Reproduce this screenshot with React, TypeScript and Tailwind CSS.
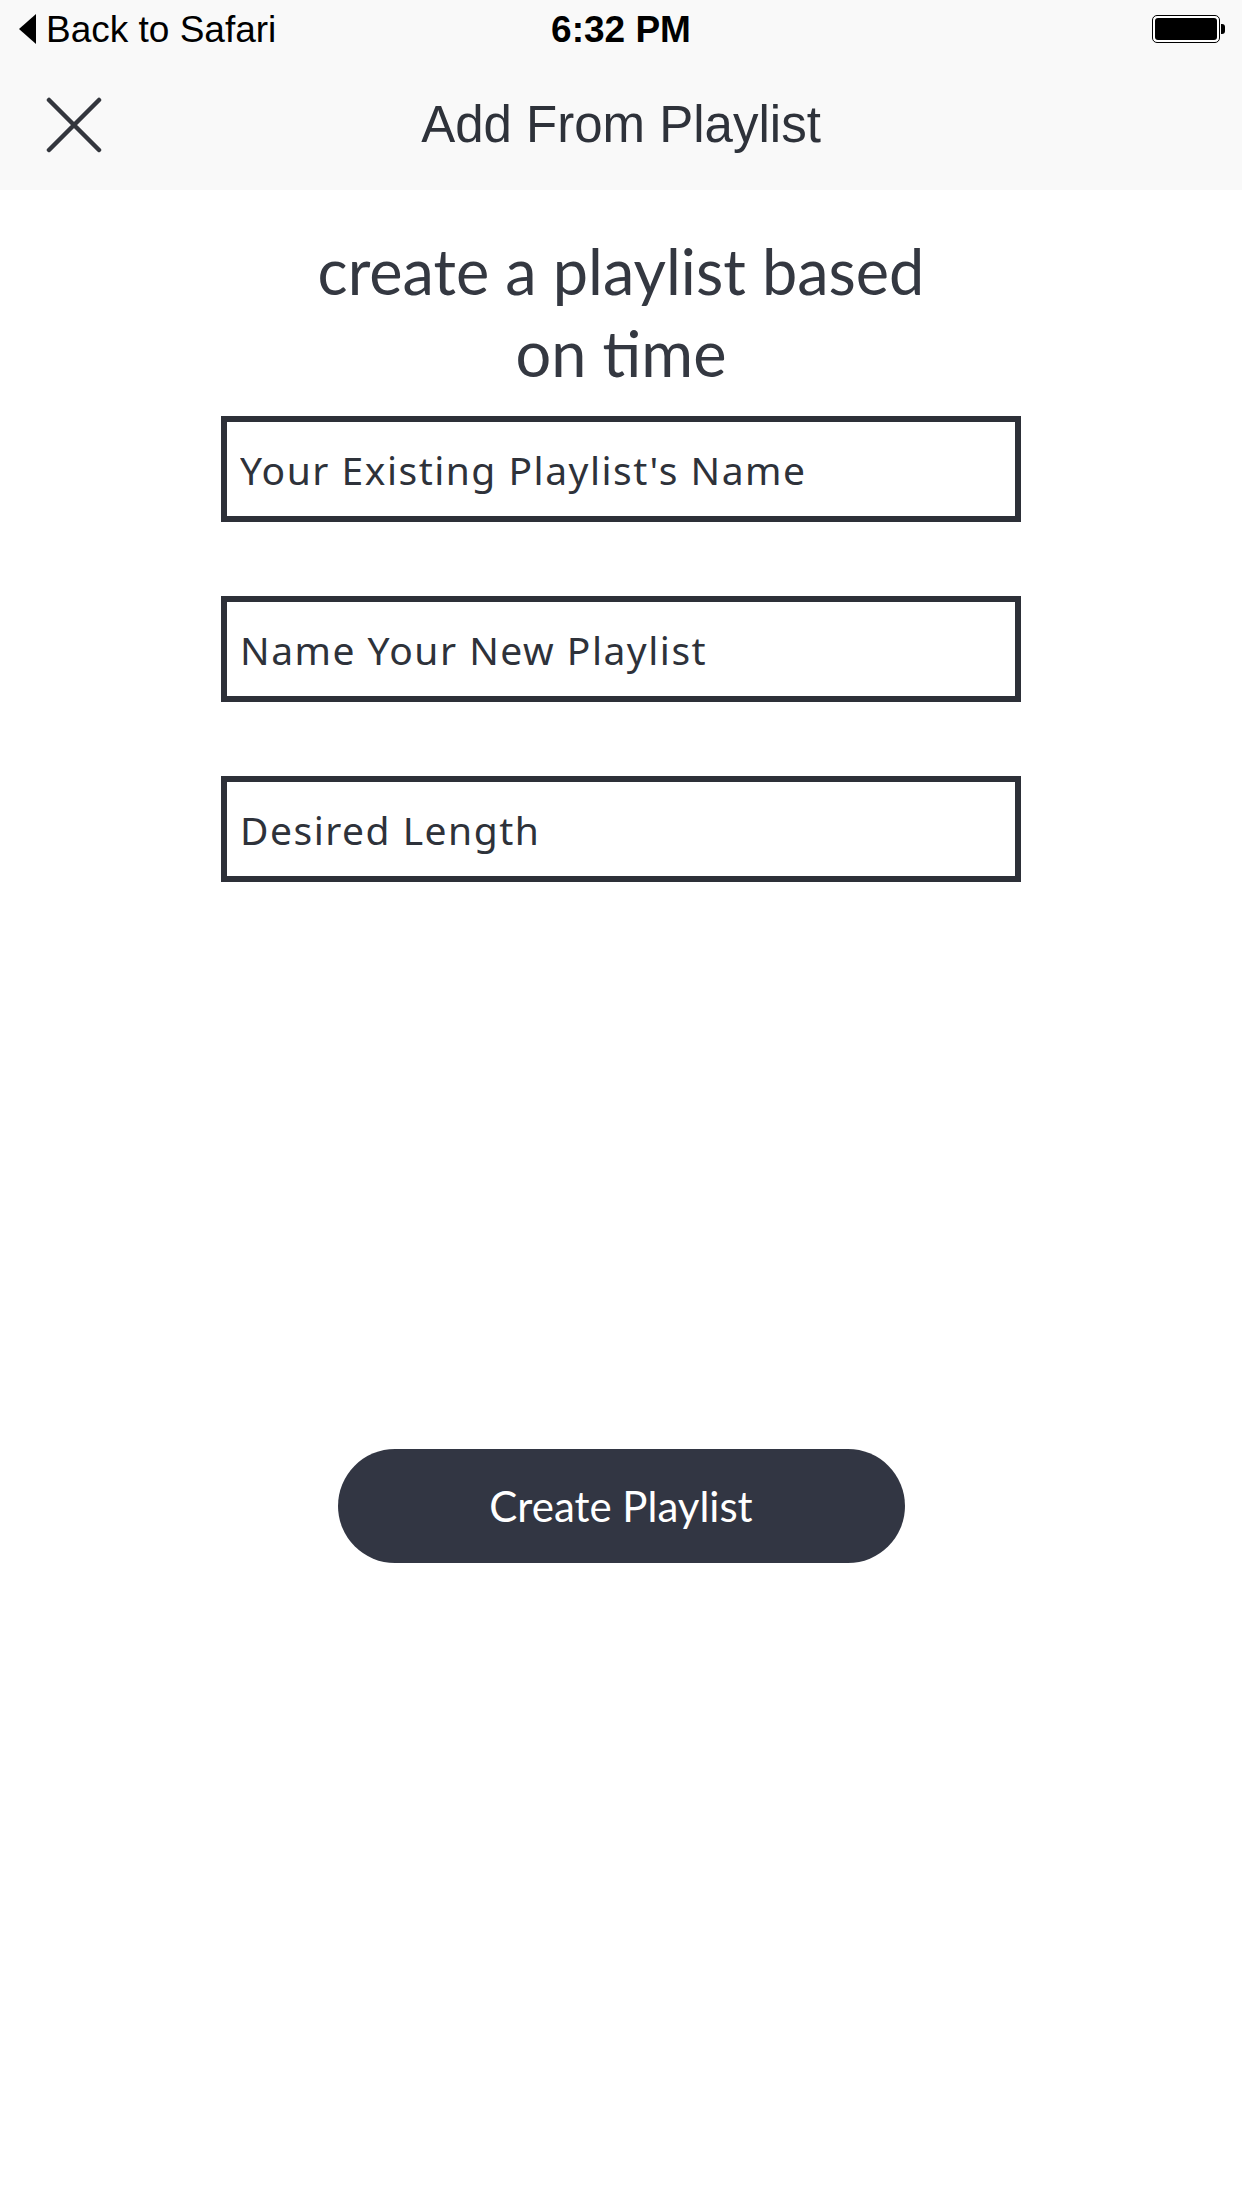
import React from "react";

function CloseIcon() {
  return (
    <svg width="56" height="56" viewBox="0 0 56 56" fill="none">
      <path d="M3 3 L53 53 M53 3 L3 53" stroke="#33363d" strokeWidth="4.5" strokeLinecap="round" />
    </svg>
  );
}

function Battery() {
  return (
    <div className="flex items-center">
      <div className="w-[68px] h-[28px] rounded-[5px] border-[1.5px] border-black p-[2px] bg-white">
        <div className="w-full h-full rounded-[3px] bg-black" />
      </div>
      <div className="w-[4px] h-[10px] rounded-r-[3px] bg-black ml-[1px]" />
    </div>
  );
}

function Field({ placeholder }: { placeholder: string }) {
  return (
    <input
      placeholder={placeholder}
      className="block w-[800px] h-[106px] border-[6px] border-[#2d3038] bg-white px-[13px] text-[39px] tracking-[1.5px] text-[#2e323a] placeholder:text-[#2e323a] outline-none font-['Noto_Sans',sans-serif]"
    />
  );
}

export default function App() {
  return (
    <div className="w-[1242px] min-h-[2208px] bg-white flex flex-col font-['Liberation_Sans',sans-serif]">
      <div className="bg-[#f9f9f9] h-[190px] flex flex-col">
        <div className="h-[58px] flex items-center justify-between pl-[19px] pr-[17px] relative">
          <div className="flex items-center gap-[10px]">
            <svg width="17" height="30" viewBox="0 0 17 30">
              <path d="M17 0 L0 15 L17 30 Z" fill="#000" />
            </svg>
            <span className="text-[37px] text-black leading-none">Back to Safari</span>
          </div>
          <span className="absolute left-1/2 -translate-x-1/2 text-[37px] font-bold text-black leading-none">6:32 PM</span>
          <Battery />
        </div>
        <div className="flex-1 flex items-center relative">
          <div className="pl-[46px] pt-[2px]">
            <CloseIcon />
          </div>
          <span className="absolute left-1/2 -translate-x-1/2 text-[51px] text-[#2e323a] leading-none">Add From Playlist</span>
        </div>
      </div>
      <div className="flex flex-col items-center">
        <h1 className="mt-[40px] text-center text-[63px] leading-[82px] text-[#343841] font-normal font-['Lato',sans-serif]">
          create a playlist based
          <br />
          on time
        </h1>
        <div className="mt-[22px] flex flex-col gap-[74px]">
          <Field placeholder="Your Existing Playlist's Name" />
          <Field placeholder="Name Your New Playlist" />
          <Field placeholder="Desired Length" />
        </div>
        <button className="mt-[567px] w-[567px] h-[114px] rounded-full bg-[#323643] text-white text-[42px] font-['Lato',sans-serif]">
          Create Playlist
        </button>
      </div>
    </div>
  );
}
